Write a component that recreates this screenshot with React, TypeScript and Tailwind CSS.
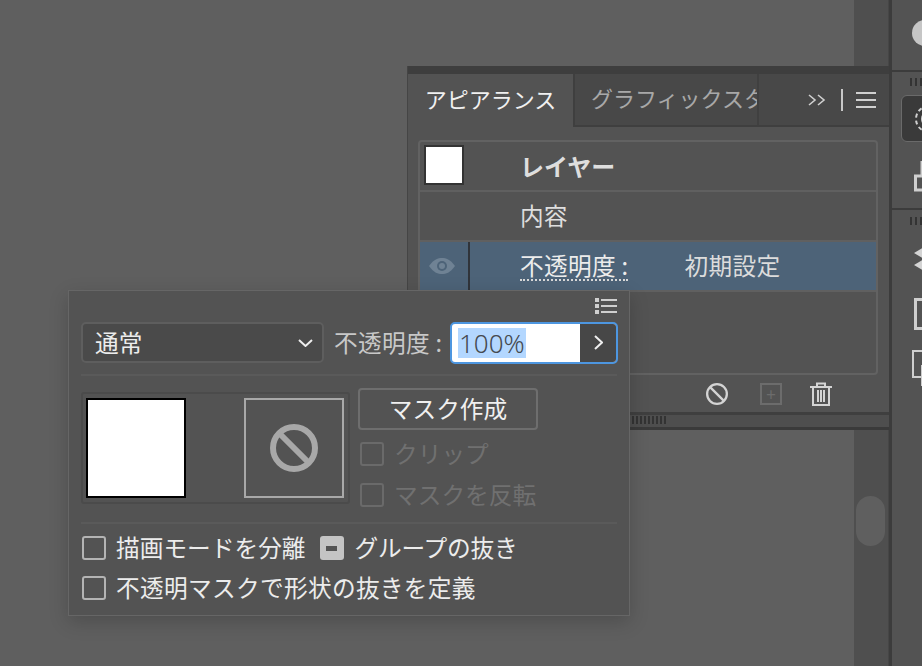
const FONT = 'font-["Noto_Sans_CJK_JP","Noto_Sans_CJK_SC",sans-serif]'

function BanIcon({ size, color, stroke }: { size: number; color: string; stroke: number }) {
  return (
    <svg width={size} height={size} viewBox="0 0 48 48" fill="none" stroke={color} strokeWidth={stroke}>
      <circle cx="24" cy="24" r={24 - stroke / 2} />
      <path d="M9 9 L39 39" />
    </svg>
  )
}

function Checkbox({ dim }: { dim?: boolean }) {
  return (
    <span
      className={`block h-6 w-6 shrink-0 rounded-[3px] border-2 ${dim ? 'border-[#6a6a6a]' : 'border-[#b4b4b4]'}`}
    />
  )
}

function PanelRow({ children, selected }: { children: React.ReactNode; selected?: boolean }) {
  return (
    <div
      className={`flex h-[50px] items-stretch border-b-2 border-[#606060] ${selected ? 'bg-[#4d6378]' : ''}`}
    >
      {children}
    </div>
  )
}

function AppearancePanel() {
  return (
    <div className="absolute left-[407px] top-[66px] flex h-[364px] w-[482px] flex-col border-l border-[#454545] bg-[#535353]">
      <div className="h-2 shrink-0 bg-[#3e3e3e]" />
      <div className="flex h-[53px] shrink-0 border-b-2 border-[#3f3f3f] bg-[#484848]">
        <div className="-mb-[2px] flex w-[167px] items-center justify-center border-r-2 border-[#3f3f3f] bg-[#535353] pb-[5px] text-[22px] text-[#f0f0f0]">
          アピアランス
        </div>
        <div className="flex w-[184px] items-center overflow-hidden border-r-2 border-[#404040] pb-[5px] pl-4 text-[22px] text-[#a8a8a8]">
          <span className="whitespace-nowrap">グラフィックスタ</span>
        </div>
        <div className="flex flex-1 items-center justify-end pr-[13px]">
          <svg width="18" height="12" viewBox="0 0 18 12" fill="none" stroke="#d0d0d0" strokeWidth="1.6">
            <path d="M1 1 L7 6 L1 11 M10 1 L16 6 L10 11" />
          </svg>
          <span className="ml-[15px] h-[22px] w-[2px] bg-[#c8c8c8]" />
          <span className="ml-[13px] flex w-5 flex-col gap-[5px]">
            <span className="h-[2px] bg-[#d0d0d0]" />
            <span className="h-[2px] bg-[#d0d0d0]" />
            <span className="h-[2px] bg-[#d0d0d0]" />
          </span>
        </div>
      </div>
      <div className="ml-[10px] mr-[11px] mt-[13px] h-[235px] rounded-[4px] border-2 border-[#626262] bg-[#535353]">
        <PanelRow>
          <div className="w-[50px] pl-1 pt-[3px]">
            <div className="h-[40px] w-[40px] border-2 border-[#333] bg-white" />
          </div>
          <div className="flex items-center pl-[50px] text-[24px] font-bold text-[#dedede]">レイヤー</div>
        </PanelRow>
        <PanelRow>
          <div className="flex items-center pl-[100px] text-[23.7px] text-[#dedede]">内容</div>
        </PanelRow>
        <PanelRow selected>
          <div className="flex w-[50px] items-center justify-center border-r-2 border-[#30343a] pr-[4px]">
            <svg width="26" height="16" viewBox="0 0 26 16">
              <path d="M0 8 C5 1 9 0 13 0 C17 0 21 1 26 8 C21 15 17 16 13 16 C9 16 5 15 0 8 Z" fill="#6f8294" />
              <circle cx="13" cy="8" r="5" fill="#4d6378" />
              <circle cx="13" cy="8" r="3" fill="#6f8294" />
            </svg>
          </div>
          <div className="flex items-center pl-[50px] text-[23.7px] tracking-[0.3px] text-[#ececec]">
            <span className="border-b-2 border-dotted border-[#d8d8d8] leading-[28px]">不透明度 :</span>
            <span className="ml-[56px] text-[#dcdcdc]">初期設定</span>
          </div>
        </PanelRow>
      </div>
      <div className="flex h-[37px] shrink-0 items-center pl-[298px]">
        <BanIcon size={22} color="#d4d4d4" stroke={5} />
        <span className="ml-[32px] flex h-[22px] w-[22px] items-center justify-center border-2 border-[#6c6c6c] text-[17px] leading-none text-[#6c6c6c]">
          +
        </span>
        <svg className="ml-[28px]" width="22" height="24" viewBox="0 0 22 24" fill="none" stroke="#d4d4d4" strokeWidth="2">
          <path d="M0 5 H22 M7 5 V1.5 H15 V5 M3 5 V23 H19 V5 M8 8 V20 M11 8 V20 M14 8 V20" />
        </svg>
      </div>
      <div className="h-[18px] shrink-0 border-y-[3px] border-t-[#3f3f3f] border-b-[#3a3a3a] bg-[#4e4e4e] pt-px">
        <div className="ml-[224px] h-2 w-9 bg-[repeating-linear-gradient(90deg,#333_0,#333_2px,transparent_2px,transparent_4px)]" />
      </div>
    </div>
  )
}

function OpacityPopup() {
  return (
    <div className="absolute left-[68px] top-[290px] h-[326px] w-[562px] border border-[#666] bg-[#535353] px-3 shadow-[0_6px_18px_rgba(0,0,0,0.18)]">
      <div className="flex h-[31px] justify-end pt-[7px]">
        <span className="flex h-4 w-[22px] flex-col justify-between">
          <span className="flex items-center gap-[2px]"><i className="h-1 w-1 bg-[#cfcfcf]" /><i className="h-[2px] flex-1 bg-[#cfcfcf]" /></span>
          <span className="flex items-center gap-[2px]"><i className="h-1 w-1 bg-[#cfcfcf]" /><i className="h-[2px] flex-1 bg-[#cfcfcf]" /></span>
          <span className="flex items-center gap-[2px]"><i className="h-1 w-1 bg-[#cfcfcf]" /><i className="h-[2px] flex-1 bg-[#cfcfcf]" /></span>
        </span>
      </div>
      <div className="flex h-[41px] items-center">
        <div className="flex h-[41px] w-[243px] shrink-0 items-center justify-between rounded-[5px] border-2 border-[#5e5e5e] bg-[#4a4a4a] pl-3 pr-[9px] text-[23.7px] text-[#ececec]">
          通常
          <svg width="15" height="8" viewBox="0 0 15 8" fill="none" stroke="#eee" strokeWidth="2">
            <path d="M1 1 L7.5 7 L14 1" />
          </svg>
        </div>
        <span className="ml-[10px] w-[116px] shrink-0 whitespace-nowrap text-[23.7px] tracking-[0.3px] text-[#c8c8c8]">不透明度 :</span>
        <div className="flex h-[42px] w-[168px] shrink-0 overflow-hidden rounded-[5px] border-2 border-[#4d96e0] bg-white">
          <div className="flex w-[128px] items-center pl-[6px]">
            <span className="bg-[#b3d7ff] px-px text-[26px] font-light leading-[30px] text-[#454a50] [font-family:'Noto_Sans',sans-serif]">100%</span>
          </div>
          <div className="flex flex-1 items-center justify-center bg-[#474747]">
            <svg width="9" height="15" viewBox="0 0 9 15" fill="none" stroke="#eee" strokeWidth="2">
              <path d="M1 1 L8 7.5 L1 14" />
            </svg>
          </div>
        </div>
      </div>
      <div className="mt-[11px] h-[2px] bg-[#5a5a5a]" />
      <div className="mt-[12px] flex">
        <div className="mt-[4px] flex h-[112px] w-[269px] items-center justify-between rounded-[3px] border-2 border-[#4b4b4b] pl-[3px] pr-[4px]">
          <div className="h-[100px] w-[100px] border-2 border-black bg-white" />
          <div className="flex h-[100px] w-[100px] items-center justify-center border-2 border-[#a8a8a8]">
            <BanIcon size={48} color="#a8a8a8" stroke={6} />
          </div>
        </div>
        <div className="ml-[8px]">
          <div className="flex h-[42px] w-[180px] items-center justify-center rounded-[4px] border-2 border-[#6e6e6e] text-[23.7px] text-[#f0f0f0]">
            マスク作成
          </div>
          <div className="ml-[2px] mt-[12px] flex h-6 items-center gap-[10px] text-[23.7px] text-[#707070]">
            <Checkbox dim />
            クリップ
          </div>
          <div className="ml-[2px] mt-[17px] flex h-6 items-center gap-[10px] text-[23.7px] text-[#707070]">
            <Checkbox dim />
            マスクを反転
          </div>
        </div>
      </div>
      <div className="mt-[15px] h-[2px] bg-[#5a5a5a]" />
      <div className="ml-[1px] mt-[12px] flex h-6 items-center text-[23.7px] text-[#ececec]">
        <Checkbox />
        <span className="ml-[10px]">描画モードを分離</span>
        <span className="ml-[14px] flex h-6 w-6 items-center justify-center rounded-[3px] bg-[#c4c4c4]">
          <i className="h-[5px] w-[11px] bg-[#535353]" />
        </span>
        <span className="ml-[11px] tracking-[-0.2px]">グループの抜き</span>
      </div>
      <div className="ml-[1px] mt-[16px] flex h-6 items-center text-[23.7px] text-[#ececec]">
        <Checkbox />
        <span className="ml-[10px] tracking-[0.3px]">不透明マスクで形状の抜きを定義</span>
      </div>
    </div>
  )
}

function DockGrip() {
  return (
    <div className="ml-[18px] flex h-2 gap-[3px]">
      <i className="w-[2px] bg-[#333]" />
      <i className="w-[2px] bg-[#333]" />
      <i className="w-[2px] bg-[#333]" />
    </div>
  )
}

function Dock() {
  return (
    <div className="flex w-[30px] shrink-0 flex-col overflow-hidden bg-[#535353]">
      <div className="h-[72px] shrink-0 overflow-hidden border-b-2 border-[#3c3c3c] pl-5 pt-5">
        <div className="h-[26px] w-[26px] rounded-full bg-[#c6c6c6]" />
      </div>
      <div className="h-[138px] shrink-0 border-b-2 border-[#3c3c3c] pt-[6px]">
        <DockGrip />
        <div className="ml-[9px] mt-[9px] flex h-[47px] w-[30px] items-center rounded-[6px] border border-[#6a6a6a] bg-[#3a3a3a] pl-[12px]">
          <svg className="shrink-0" width="30" height="30" viewBox="0 0 30 30" fill="none">
            <circle cx="15" cy="15" r="13" stroke="#d0d0d0" strokeWidth="2" strokeDasharray="4 3" />
            <circle cx="15" cy="15" r="8" fill="#d0d0d0" />
          </svg>
        </div>
        <svg className="ml-[22px] mt-[19px]" width="30" height="32" viewBox="0 0 30 32" fill="none" stroke="#cfcfcf" strokeWidth="3">
          <path d="M8 0 V15 M1.5 15 H30 V29 H1.5 Z" />
        </svg>
      </div>
      <div className="flex-1 pt-[7px]">
        <DockGrip />
        <svg className="ml-[22px] mt-[22px]" width="30" height="24" viewBox="0 0 30 24" fill="#d4d4d4">
          <path d="M0 6 L10 0 V12 Z M0 18 L10 12 V24 Z" />
        </svg>
        <div className="ml-[22px] mt-[27px] h-[32px] w-[30px] border-[3px] border-[#cfcfcf]" />
        <svg className="ml-[20px] mt-[20px]" width="30" height="36" viewBox="0 0 30 36" fill="none" stroke="#cfcfcf" strokeWidth="2">
          <path d="M1 1 H16 V27 H1 Z M10 15 H30 M10 15 V36" />
        </svg>
      </div>
    </div>
  )
}

export default function App() {
  return (
    <div className={`relative flex h-[666px] w-[922px] overflow-hidden bg-[#5f5f5f] ${FONT}`}>
      <div className="flex-1" />
      <div className="flex w-[35px] shrink-0 flex-col border-r border-[#464646] bg-[#4f4f4f] pl-[2px] pr-[3px] pt-[496px]">
        <div className="h-[50px] rounded-[15px] bg-[#5f5f5f]" />
      </div>
      <div className="w-[3px] shrink-0 bg-[#3c3c3c]" />
      <Dock />
      <AppearancePanel />
      <OpacityPopup />
    </div>
  )
}
